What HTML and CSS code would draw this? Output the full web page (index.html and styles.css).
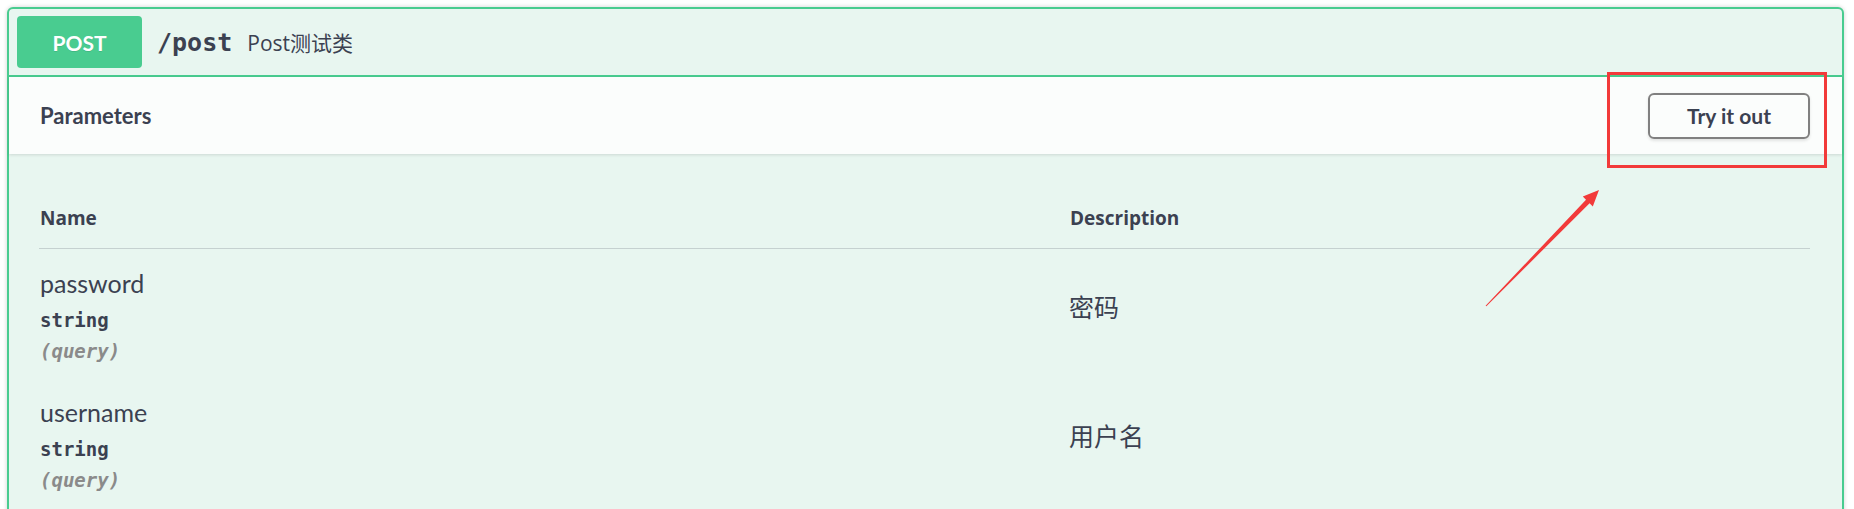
FILE: index.html
```html
<!DOCTYPE html>
<html lang="zh">
<head>
<meta charset="utf-8">
<title>POST /post</title>
<link rel="stylesheet" href="styles.css">
</head>
<body>
<div class="page">
  <div class="opblock">
    <div class="summary">
      <span class="method">POST</span>
      <span class="path">/post</span>
      <span class="desc">Post测试类</span>
    </div>
    <div class="section-header">
      <h4 class="title">Parameters</h4>
      <button class="try-btn">Try it out</button>
    </div>
    <div class="table-container">
      <table class="params">
        <colgroup><col class="col-name"><col class="col-desc"></colgroup>
        <thead>
          <tr><th>Name</th><th>Description</th></tr>
        </thead>
        <tbody>
          <tr>
            <td class="cell-name">
              <div class="pname">password</div>
              <div class="ptype">string</div>
              <div class="pin">(query)</div>
            </td>
            <td class="cell-desc">密码</td>
          </tr>
          <tr>
            <td class="cell-name">
              <div class="pname">username</div>
              <div class="ptype">string</div>
              <div class="pin">(query)</div>
            </td>
            <td class="cell-desc">用户名</td>
          </tr>
        </tbody>
      </table>
    </div>
  </div>
  <svg class="annot" width="1854" height="509" viewBox="0 0 1854 509">
    <rect x="1608.5" y="73.5" width="217" height="93" fill="none" stroke="#f23a3a" stroke-width="3"/>
    <polygon fill="#f23a3a" points="1486.4,306.3 1589.6,203.2 1592.8,206.4 1599,190 1582.8,196.6 1586.0,199.8 1485.6,305.7"/>
  </svg>
</div>
</body>
</html>
```
FILE: styles.css
```css
html, body {
  margin: 0;
  padding: 0;
  background: #ffffff;
}

.page {
  position: relative;
  height: 509px;
  overflow: hidden;
  box-sizing: border-box;
  padding: 7px 10px 0 7px;
}

.opblock {
  height: 540px;
  border: 2px solid #49cc90;
  border-radius: 6px;
  background: #e8f6f0;
  box-shadow: 0 0 4px rgba(0, 0, 0, 0.19);
}

.summary {
  display: flex;
  align-items: center;
  padding: 7px 8px;
  border-bottom: 2px solid #49cc90;
}

.method {
  display: flex;
  align-items: center;
  justify-content: center;
  width: 125px;
  height: 52px;
  box-sizing: border-box;
  background: #49cc90;
  border-radius: 4px;
  color: #ffffff;
  font-family: Lato, "Open Sans", sans-serif;
  font-weight: 700;
  font-size: 21px;
  text-shadow: 0 1px 0 rgba(0, 0, 0, 0.1);
}

.path {
  padding: 0 15px 0 15px;
  font-family: "DejaVu Sans Mono", monospace;
  font-weight: 700;
  font-size: 25px;
  color: #3b4151;
}

.desc {
  font-family: "Open Sans", "Noto Sans CJK SC", sans-serif;
  font-size: 21px;
  color: #3b4151;
}

.section-header {
  position: relative;
  display: flex;
  align-items: center;
  justify-content: space-between;
  box-sizing: border-box;
  min-height: 77px;
  padding: 12px 32px 12px 30px;
  background: rgba(255, 255, 255, 0.8);
  box-shadow: 0 1px 3px rgba(0, 0, 0, 0.12);
}

.title {
  margin: 0;
  padding-left: 1px;
  font-family: Lato, "Open Sans", sans-serif;
  font-weight: 700;
  font-size: 22px;
  color: #3b4151;
}

.try-btn {
  width: 162px;
  height: 46px;
  padding: 0;
  background: transparent;
  border: 2px solid #808080;
  border-radius: 6px;
  box-shadow: 0 1.5px 3px rgba(0, 0, 0, 0.1);
  font-family: Lato, "Open Sans", sans-serif;
  font-weight: 700;
  font-size: 21px;
  color: #3b4151;
}

.table-container {
  padding: 30px 32px 0 30px;
}

.params {
  width: 100%;
  table-layout: fixed;
  border-collapse: separate;
  border-spacing: 0;
}

.col-name {
  width: 1030px;
}

.params th {
  text-align: left;
  padding: 20px 0 16px 1px;
  font-family: "Open Sans", sans-serif;
  font-weight: 700;
  font-size: 19px;
  line-height: 28px;
  color: #3b4151;
  border-bottom: 1px solid rgba(59, 65, 81, 0.2);
}

.cell-name {
  vertical-align: top;
  padding: 19px 0 13px 1px;
}

.pname {
  font-family: Lato, "Open Sans", sans-serif;
  font-weight: 400;
  font-size: 25px;
  line-height: 30px;
  color: #3b4151;
}

.ptype {
  margin-top: 9px;
  font-family: "DejaVu Sans Mono", monospace;
  font-weight: 700;
  font-size: 19px;
  line-height: 27px;
  color: #3b4151;
}

.pin {
  margin-top: 4px;
  font-family: "DejaVu Sans Mono", monospace;
  font-style: italic;
  font-weight: 700;
  font-size: 19px;
  line-height: 27px;
  color: #8a8a8a;
}

.cell-desc {
  vertical-align: middle;
  padding: 19px 0 33px;
  font-family: "Open Sans", "Noto Sans CJK SC", sans-serif;
  font-size: 25px;
  line-height: 30px;
  color: #3b4151;
}

.annot {
  position: absolute;
  top: 0;
  left: 0;
  pointer-events: none;
}
```
